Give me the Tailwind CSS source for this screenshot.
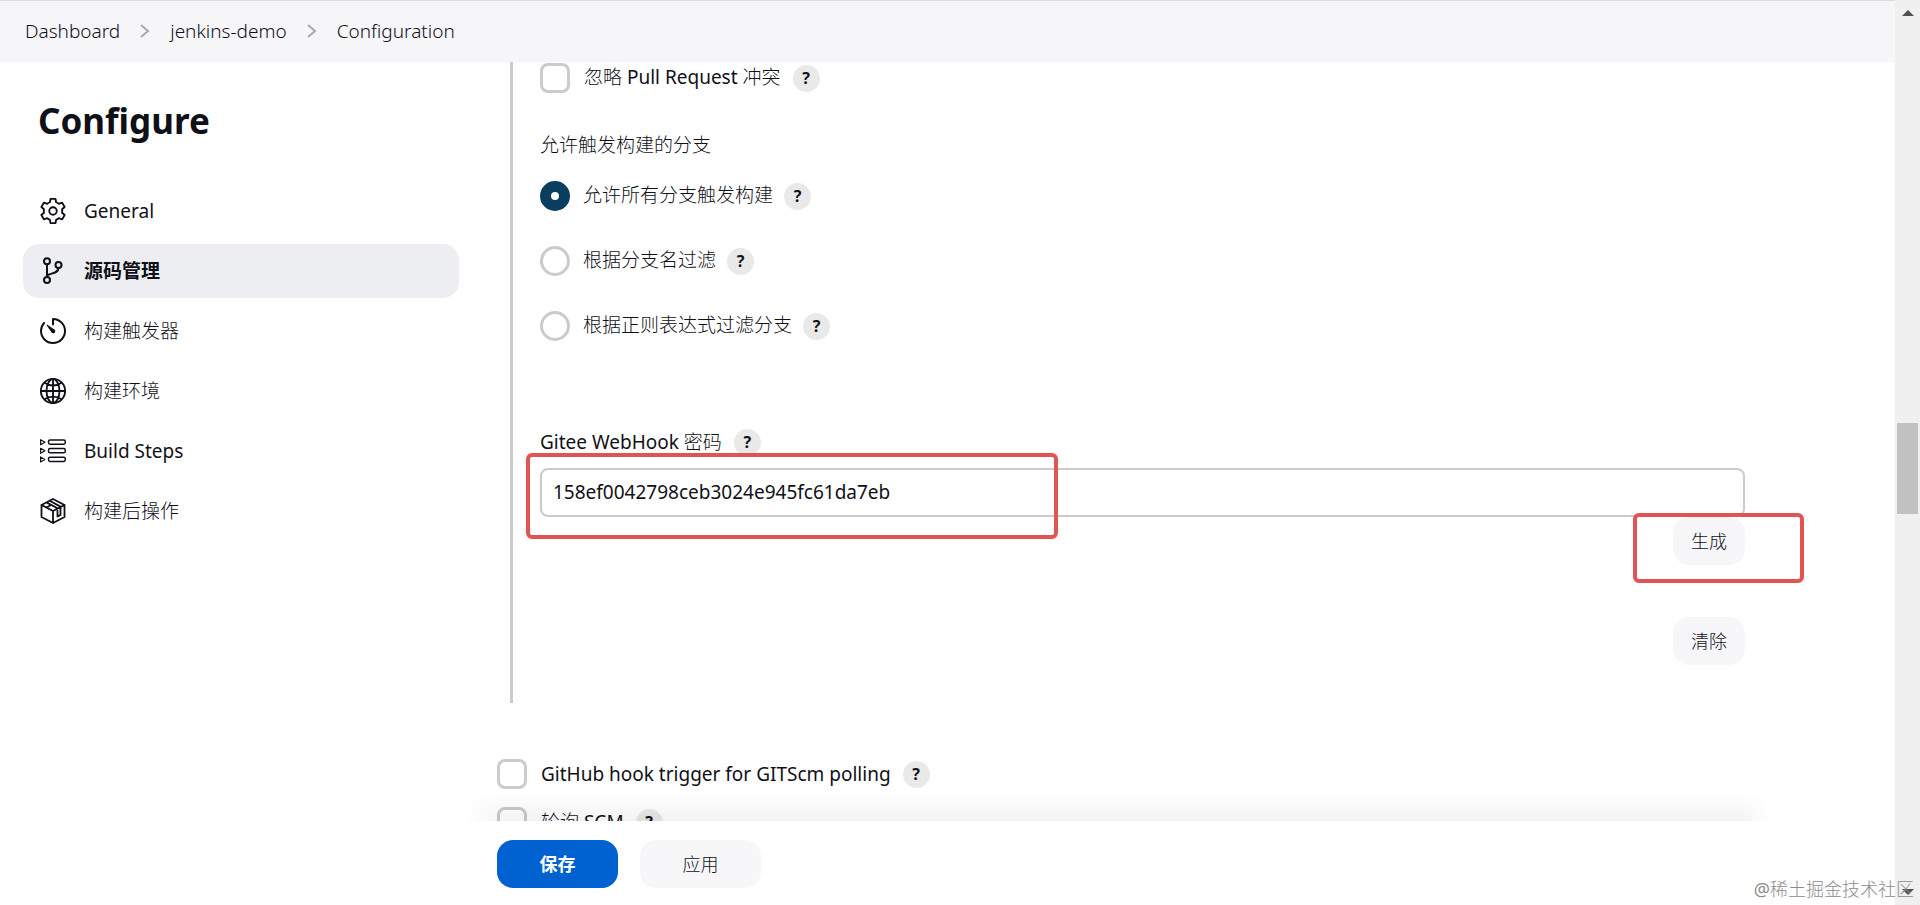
<!DOCTYPE html>
<html lang="zh-CN">
<head>
    <meta charset="UTF-8">
    <meta name="viewport" content="width=device-width, initial-scale=1.0">
    <title>jenkins-demo Configuration</title>
    <script src="https://cdn.jsdelivr.net/npm/@tailwindcss/browser@4"></script>
</head>
<body class="h-screen overflow-hidden flex bg-white text-[#101018] text-[19px] leading-7 font-['Noto_Sans','Noto_Sans_CJK_SC_Light','Noto_Sans_CJK_SC',sans-serif]">

    <div class="flex-1 min-w-0 flex flex-col">

        <!-- Breadcrumbs -->
        <nav class="h-[62px] shrink-0 bg-[#f6f6f9] border-t border-[#dcdce0] pl-[25px] pb-0.5 flex items-center gap-[19px] font-light" aria-label="Breadcrumb">
            <a href="#">Dashboard</a>
            <svg class="w-3 h-4 text-[#a9a9ad]" viewBox="0 0 12 16" fill="none" stroke="currentColor" stroke-width="2"><path d="M2 2l7 6-7 6"/></svg>
            <a href="#">jenkins-demo</a>
            <svg class="w-3 h-4 text-[#a9a9ad]" viewBox="0 0 12 16" fill="none" stroke="currentColor" stroke-width="2"><path d="M2 2l7 6-7 6"/></svg>
            <a href="#">Configuration</a>
        </nav>

        <div class="flex-1 min-h-0 flex">

            <!-- Side panel -->
            <aside class="w-[459px] shrink-0 pl-[23px] pt-8">
                <h1 class="pl-[15px] mb-9 text-[35px] leading-[54px] font-bold">Configure</h1>
                <ul class="flex flex-col gap-1.5">
                    <li>
                        <a href="#general" class="h-[54px] pl-3.5 flex items-center gap-[15px] rounded-2xl">
                            <svg class="w-8 h-8" viewBox="0 0 512 512" fill="none" stroke="currentColor" stroke-width="30" stroke-linecap="round" stroke-linejoin="round"><circle cx="256" cy="256" r="60"/><path d="M216 62h80l10 54a150 150 0 0 1 42 25l54-19 40 69-41 38a150 150 0 0 1 0 54l41 38-40 69-54-19a150 150 0 0 1-42 25l-10 54h-80l-10-54a150 150 0 0 1-42-25l-54 19-40-69 41-38a150 150 0 0 1 0-54l-41-38 40-69 54 19a150 150 0 0 1 42-25z"/></svg>
                            General
                        </a>
                    </li>
                    <li>
                        <a href="#scm" class="h-[54px] pl-3.5 flex items-center gap-[15px] rounded-2xl bg-[#edeef2] font-bold font-['Noto_Sans','Noto_Sans_CJK_SC',sans-serif]">
                            <svg class="w-8 h-8" viewBox="0 0 32 32" fill="none" stroke="currentColor" stroke-width="2" stroke-linecap="round"><circle cx="10" cy="6.300" r="3"/><circle cx="10" cy="25" r="3"/><circle cx="21.500" cy="10" r="3"/><path d="M10 9.300v12.700M21.500 13c0 5.500-8 5-11.500 7.500"/></svg>
                            源码管理
                        </a>
                    </li>
                    <li>
                        <a href="#triggers" class="h-[54px] pl-3.5 flex items-center gap-[15px] rounded-2xl">
                            <svg class="w-8 h-8" viewBox="0 0 512 512"><path d="M112.91 128A191.85 191.85 0 0064 254c-1.18 106.35 85.65 193.8 192 194 106.2.2 192-85.83 192-192 0-104.54-83.55-189.61-187.5-192a4.36 4.36 0 00-4.5 4.37V152" fill="none" stroke="currentColor" stroke-width="32" stroke-linecap="round" stroke-linejoin="round"/><path fill="currentColor" d="M233.38 278.63l-79-113a8.13 8.13 0 0111.32-11.32l113 79a32.5 32.5 0 01-37.25 53.26 33.21 33.21 0 01-8.07-7.94z"/></svg>
                            构建触发器
                        </a>
                    </li>
                    <li>
                        <a href="#environment" class="h-[54px] pl-3.5 flex items-center gap-[15px] rounded-2xl">
                            <svg class="w-8 h-8" viewBox="0 0 512 512" fill="none" stroke="currentColor" stroke-width="30" stroke-linecap="round"><circle cx="256" cy="256" r="194"/><path d="M256 62c-54 0-104 87-104 194s50 194 104 194 104-87 104-194S310 62 256 62zM127 127c36 25 80 40 129 40s93-15 129-40M385 385c-36-25-80-40-129-40s-93 15-129 40M256 62v388M450 256H62"/></svg>
                            构建环境
                        </a>
                    </li>
                    <li>
                        <a href="#steps" class="h-[54px] pl-3.5 flex items-center gap-[15px] rounded-2xl">
                            <svg class="w-8 h-8" viewBox="0 0 32 32" fill="none" stroke="currentColor" stroke-width="1.5" stroke-linejoin="round"><rect x="11.500" y="5" width="16.800" height="4.200" rx="1.600"/><rect x="11.500" y="13.600" width="16.800" height="4.200" rx="1.600"/><rect x="11.500" y="22.200" width="16.800" height="4.200" rx="1.600"/><path stroke-width="1.2" d="M3.600 4.700v5l4.300-2.500zM3.600 13.300v5l4.300-2.500zM3.600 21.900v5l4.300-2.500z"/></svg>
                            Build Steps
                        </a>
                    </li>
                    <li>
                        <a href="#post-build" class="h-[54px] pl-3.5 flex items-center gap-[15px] rounded-2xl">
                            <svg class="w-8 h-8" viewBox="0 0 32 32" fill="none" stroke="currentColor" stroke-width="1.8" stroke-linecap="round" stroke-linejoin="round"><path d="M16 4l11.500 6v12L16 28 4.500 22V10zM4.500 10L16 16l11.500-6M16 16v12M9.500 7.400L20.500 13.200v8.300l3-1.600v-8.300L12.700 5.800M9.500 12.500l4-2.200"/></svg>
                            构建后操作
                        </a>
                    </li>
                </ul>
            </aside>

            <!-- Config form -->
            <form class="flex-1 min-w-0 pl-[14px] flex flex-col">
                <div class="flex-1 min-h-0 overflow-hidden pl-6 pr-[150px]">
                    <div class="ml-[13px] pl-[27px] border-l-3 border-[#c9cbcc] h-[641px]">
                        <div class="pt-px flex items-center">
                            <input type="checkbox" id="ignoreConflicts" class="appearance-none w-[30px] h-[30px] border-3 border-[#cbcbcd] rounded-lg">
                            <label for="ignoreConflicts" class="pl-3.5 pb-0.5">忽略 Pull Request 冲突</label>
                            <a href="#" class="ml-3 w-[27px] h-[27px] rounded-full bg-[#e9e9e9] text-base leading-[27px] text-center font-bold">?</a>
                        </div>

                        <fieldset>
                            <legend class="pt-[38px] pb-[22px]">允许触发构建的分支</legend>
                            <div class="flex flex-col gap-[35px]">
                                <div class="flex items-center">
                                    <input type="radio" name="branch" id="branchAll" checked class="appearance-none w-[30px] h-[30px] rounded-full border-3 border-[#cbcbcd] checked:border-11 checked:border-[#0a3e5f]">
                                    <label for="branchAll" class="pl-[13px] pb-0.5">允许所有分支触发构建</label>
                                    <a href="#" class="ml-[11px] w-[27px] h-[27px] rounded-full bg-[#e9e9e9] text-base leading-[27px] text-center font-bold">?</a>
                                </div>
                                <div class="flex items-center">
                                    <input type="radio" name="branch" id="branchName" class="appearance-none w-[30px] h-[30px] rounded-full border-3 border-[#cbcbcd] checked:border-11 checked:border-[#0a3e5f]">
                                    <label for="branchName" class="pl-[13px] pb-0.5">根据分支名过滤</label>
                                    <a href="#" class="ml-[11px] w-[27px] h-[27px] rounded-full bg-[#e9e9e9] text-base leading-[27px] text-center font-bold">?</a>
                                </div>
                                <div class="flex items-center">
                                    <input type="radio" name="branch" id="branchRegex" class="appearance-none w-[30px] h-[30px] rounded-full border-3 border-[#cbcbcd] checked:border-11 checked:border-[#0a3e5f]">
                                    <label for="branchRegex" class="pl-[13px] pb-0.5">根据正则表达式过滤分支</label>
                                    <a href="#" class="ml-[11px] w-[27px] h-[27px] rounded-full bg-[#e9e9e9] text-base leading-[27px] text-center font-bold">?</a>
                                </div>
                            </div>
                        </fieldset>

                        <div class="mt-[87px] flex items-center">
                            <label for="secret">Gitee WebHook 密码</label>
                            <a href="#" class="ml-3 w-[27px] h-[27px] rounded-full bg-[#e9e9e9] text-base leading-[27px] text-center font-bold">?</a>
                        </div>
                        <div class="relative mt-3">
                            <input type="text" id="secret" value="158ef0042798ceb3024e945fc61da7eb" class="block w-full h-[49px] px-[11px] pb-0.5 border-2 border-[#cbcbcd] rounded-lg">
                            <!-- highlight box -->
                            <div class="absolute -left-3.5 -top-[15px] w-[532px] h-[86px] border-4 border-[#e05552] rounded-md"></div>
                        </div>
                        <div class="flex flex-col items-end gap-[52px]">
                            <div class="relative">
                                <button type="button" class="block h-12 px-[18px] rounded-2xl bg-[#f7f7fa] text-lg">生成</button>
                                <!-- highlight box -->
                                <div class="absolute -left-10 -top-1 w-[171px] h-[70px] border-4 border-[#e05552] rounded-md"></div>
                            </div>
                            <button type="button" class="h-12 px-[18px] rounded-2xl bg-[#f7f7fa] text-lg">清除</button>
                        </div>
                    </div>

                    <div class="mt-14 flex items-center">
                        <input type="checkbox" id="githubHook" class="appearance-none w-[30px] h-[30px] border-3 border-[#cbcbcd] rounded-lg">
                        <label for="githubHook" class="pl-3.5">GitHub hook trigger for GITScm polling</label>
                        <a href="#" class="ml-3 w-[27px] h-[27px] rounded-full bg-[#e9e9e9] text-base leading-[27px] text-center font-bold">?</a>
                    </div>
                    <div class="mt-[18px] flex items-center">
                        <input type="checkbox" id="pollScm" class="appearance-none w-[30px] h-[30px] border-3 border-[#cbcbcd] rounded-lg">
                        <label for="pollScm" class="pl-3.5">轮询 SCM</label>
                        <a href="#" class="ml-3 w-[27px] h-[27px] rounded-full bg-[#e9e9e9] text-base leading-[27px] text-center font-bold">?</a>
                    </div>
                </div>

                <!-- Sticky bottom bar -->
                <div class="relative h-[84px] shrink-0 mr-[126px] pl-6 pt-[19px] flex items-start gap-[22px]">
                    <div class="absolute bottom-full -left-2 right-0 h-7 bg-linear-to-t from-black/5 to-transparent [mask-image:linear-gradient(to_right,transparent,black_40px,black_calc(100%-30px),transparent)]"></div>
                    <button type="submit" class="w-[121px] h-12 rounded-2xl bg-[#0062d1] text-white text-lg font-bold font-['Noto_Sans','Noto_Sans_CJK_SC',sans-serif]">保存</button>
                    <button type="button" class="w-[121px] h-12 rounded-2xl bg-[#f7f7fa] text-lg">应用</button>
                </div>
            </form>
        </div>
    </div>

    <!-- Scrollbar -->
    <div class="w-[25px] shrink-0 bg-[#f0f0f0] flex flex-col items-center justify-between py-2.5">
        <svg class="w-3 h-1.5" viewBox="0 0 12 6" fill="#505050"><path d="M0 6l6-6 6 6z"/></svg>
        <div class="w-[21px] h-[91px] mt-8 bg-[#c1c1c1]"></div>
        <svg class="w-3 h-1.5" viewBox="0 0 12 6" fill="#505050"><path d="M0 0l6 6 6-6z"/></svg>
    </div>

    <p class="absolute right-1.5 bottom-1 text-lg leading-6 text-[#8c8c8c]">@稀土掘金技术社区</p>
</body>
</html>
